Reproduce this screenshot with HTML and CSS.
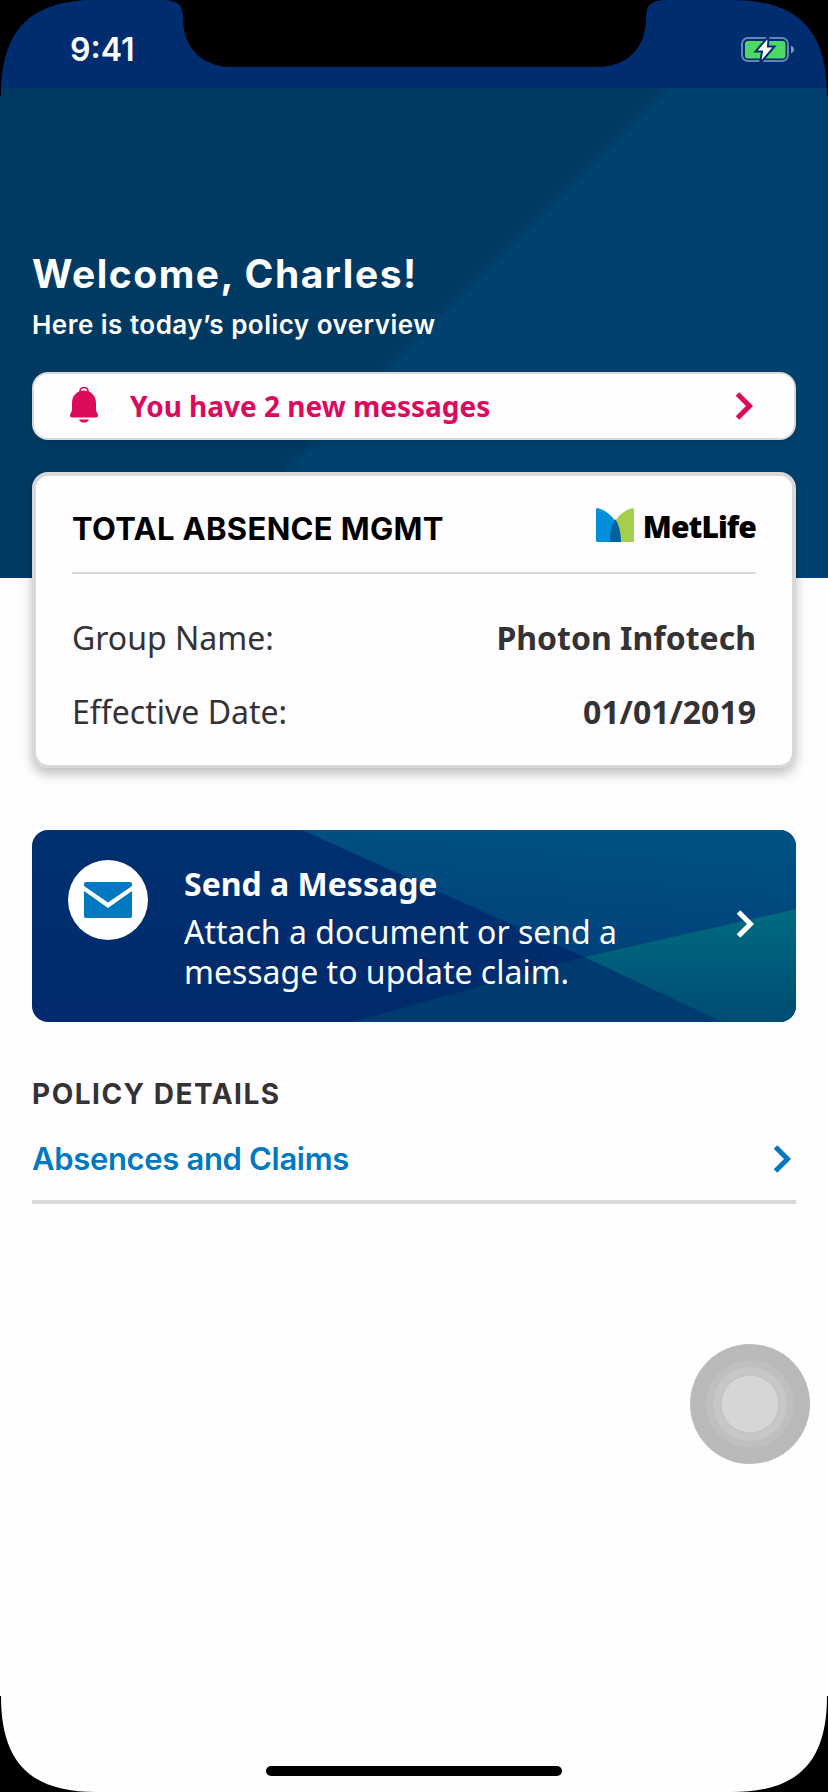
FILE: index.html
```html
<!DOCTYPE html>
<html lang="en">
<head>
<meta charset="utf-8">
<title>Policy overview</title>
<link rel="stylesheet" href="styles.css">
</head>
<body>
<div class="phone">
  <header class="status">
    <span class="time">9:41</span>
    <svg class="battery" width="54" height="28" viewBox="0 0 54 28">
      <rect x="1" y="2" width="46" height="23" rx="6" fill="none" stroke="#6684ad" stroke-width="2"/>
      <rect x="4" y="5" width="40.500" height="17.500" rx="3" fill="#4cd964"/>
      <path d="M50 9.500c4 1.500 4 6.500 0 8z" fill="#8096ba"/>
      <path d="M27.500 0.500L14.500 15.500h6.500L19 27.500 33.500 10.500h-6.500z" fill="#fff" stroke="#002d6f" stroke-width="2"/>
    </svg>
  </header>

  <section class="hero">
    <h1 class="welcome">Welcome, Charles!</h1>
    <p class="subtitle">Here is today’s policy overview</p>
    <a class="banner">
      <svg class="bell" width="28" height="38" viewBox="0 0 28 38">
        <circle cx="14" cy="5.500" r="4" fill="none" stroke="#db0a5b" stroke-width="1.700"/>
        <path d="M14 4.500C21 4.500 26 10 26 17V23.500C26 26 28 27.500 28 29.500Q28 31.500 26 31.500H2Q0 31.500 0 29.500C0 27.500 2 26 2 23.500V17C2 10 7 4.500 14 4.500ZM9 33.500H19Q18 36.600 14 36.600T9 33.500Z" fill="#db0a5b"/>
      </svg>
      <span class="banner-text">You have 2 new messages</span>
      <svg class="chev" width="20" height="28" viewBox="0 0 20 28"><path d="M2.500 2L14.500 14 2.500 26" fill="none" stroke="#db0a5b" stroke-width="5"/></svg>
    </a>
    <article class="card">
      <div class="card-head">
        <h2 class="card-title">TOTAL ABSENCE MGMT</h2>
        <div class="brand">
          <svg width="38" height="34" viewBox="0 0 38 34">
            <path d="M0 1.500Q0 0 1.500 0C15 4 25 16 25 34H1.500Q0 34 0 32.500Z" fill="#0090da"/>
            <path d="M38 1.500Q38 0 36.500 0C23 4 13.500 16 13.500 34H36.500Q38 34 38 32.500Z" fill="#a4ce4e"/>
            <path d="M19.300 11Q25 20 25 34H13.500Q13.500 20 19.300 11Z" fill="#0061a0"/>
          </svg>
          <span class="brand-name">MetLife</span>
        </div>
      </div>
      <dl class="facts">
        <div class="fact"><dt>Group Name:</dt><dd>Photon Infotech</dd></div>
        <div class="fact"><dt>Effective Date:</dt><dd>01/01/2019</dd></div>
      </dl>
    </article>
  </section>

  <main class="content">
    <a class="send">
      <svg class="send-bg" width="764" height="192" viewBox="0 0 764 192">
        <defs>
          <linearGradient id="top" x1="0.300" y1="1" x2="0.600" y2="0"><stop offset="0" stop-color="#00407a"/><stop offset="1" stop-color="#005283"/></linearGradient>
          <linearGradient id="left" x1="0" y1="0" x2="0" y2="1"><stop offset="0" stop-color="#003070"/><stop offset="1" stop-color="#002a6b"/></linearGradient>
          <linearGradient id="teal" x1="0" y1="0" x2="0" y2="1"><stop offset="0" stop-color="#006b80"/><stop offset="1" stop-color="#004c74"/></linearGradient>
        </defs>
        <rect width="764" height="192" fill="url(#left)"/>
        <path d="M270 0L552 127 764 79V0Z" fill="url(#top)"/>
        <path d="M552 127L320 192H690Z" fill="#003b70"/>
        <path d="M552 127L764 79V192H690Z" fill="url(#teal)"/>
      </svg>
      <span class="send-icon">
        <svg width="48" height="36" viewBox="0 0 48 36">
          <path d="M2 0H46Q48 0 48 2V4L24 20.500 0 4V2Q0 0 2 0ZM0 9L24 26 48 9V34Q48 36 46 36H2Q0 36 0 34Z" fill="#0079c1"/>
        </svg>
      </span>
      <span class="send-copy">
        <strong class="send-title">Send a Message</strong>
        <span class="send-text">Attach a document or send a<br>message to update claim.</span>
      </span>
      <svg class="chev" width="20" height="28" viewBox="0 0 20 28"><path d="M2.500 2L14.500 14 2.500 26" fill="none" stroke="#fff" stroke-width="5"/></svg>
    </a>
    <h3 class="section-title">POLICY DETAILS</h3>
    <a class="row">
      <span class="row-text">Absences and Claims</span>
      <svg class="chev" width="20" height="28" viewBox="0 0 20 28"><path d="M2.500 2L14.500 14 2.500 26" fill="none" stroke="#0079c1" stroke-width="5"/></svg>
    </a>
  </main>

  <svg class="touch" width="120" height="120" viewBox="0 0 120 120">
    <circle cx="60" cy="60" r="60" fill="#bab8bb"/>
    <circle cx="60" cy="60" r="44" fill="#c0bec1"/>
    <circle cx="60" cy="60" r="37" fill="#c8c6c9"/>
    <circle cx="60" cy="60" r="29" fill="#d7d5d8" stroke="#c1bfc2" stroke-width="1"/>
  </svg>

  <svg class="bezel" width="828" height="1792" viewBox="0 0 828 1792">
    <path d="M0 0H96C30 0 1 30 1 96H0ZM828 0H732C798 0 827 30 827 96H828ZM0 1792H96C30 1792 1 1762 1 1696H0ZM828 1792H732C798 1792 827 1762 827 1696H828Z"/>
    <path d="M166 0C178 1 183 5 183 18C183 50 204 67 232 67H597C625 67 646 50 646 18C646 5 651 1 663 0Z"/>
    <rect x="266" y="1766" width="296" height="10" rx="5"/>
  </svg>
</div>
</body>
</html>
```
FILE: styles.css
```css
* { box-sizing: border-box; margin: 0; padding: 0; }
body { background: #fffdff; }
.phone {
  position: relative;
  width: 828px;
  height: 1792px;
  overflow: hidden;
  background: #fffdff;
  font-family: "Noto Sans", sans-serif;
  color: #333235;
}
.status {
  display: flex;
  justify-content: space-between;
  height: 88px;
  padding: 0 33px 0 70px;
  background: #002d6f;
}
.time { padding-top: 30px; font: 600 32px/40px Inter, sans-serif; color: #fff; }
.battery { margin-top: 36px; }
.hero {
  height: 490px;
  padding: 162px 32px 0;
  background: linear-gradient(135deg, #003a63 50%, #00416f 51.200%);
}
.welcome { font: 700 39px/48px Inter, sans-serif; letter-spacing: 1.500px; color: #fff; white-space: nowrap; }
.subtitle { margin-top: 9px; font: 600 26px/36px Inter, sans-serif; letter-spacing: 0.480px; color: #fff; white-space: nowrap; }
.banner {
  display: flex;
  align-items: center;
  height: 68px;
  margin-top: 29px;
  padding: 0 39px 0 36px;
  border: 2px solid #d9d7d9;
  border-radius: 16px;
  background: #fffdff;
  box-shadow: 0 4px 8px rgba(0, 0, 0, 0.100);
}
.bell { margin-top: -3px; }
.banner-text { flex: 1; margin-left: 32px; font-size: 28px; font-weight: 700; line-height: 40px; color: #db0a5b; white-space: nowrap; }
.chev { display: block; flex: none; }
.card {
  height: 296px;
  margin-top: 32px;
  padding: 0 36px;
  border: 4px solid #d9d8d8;
  border-bottom-width: 3px;
  border-radius: 16px;
  background: #fffdff;
  box-shadow: 0 6px 12px rgba(0, 0, 0, 0.250);
}
.card-head {
  display: flex;
  justify-content: space-between;
  align-items: flex-start;
  height: 98px;
  padding-top: 32px;
  border-bottom: 2px solid #d9d9d9;
}
.card-title { font: 700 31px/42px Inter, sans-serif; letter-spacing: 0.330px; color: #000; white-space: nowrap; }
.brand { display: flex; align-items: flex-start; gap: 9px; color: #000; }
.brand-name { margin-top: -1px; font: 800 30px/40px "Open Sans", sans-serif; letter-spacing: -0.900px; white-space: nowrap; }
.facts { padding-top: 42px; font-size: 32px; line-height: 44px; }
.fact { display: flex; justify-content: space-between; margin-bottom: 30px; }
.fact dd { font-weight: 700; }
.content { padding: 252px 32px 0; }
.send {
  position: relative;
  display: flex;
  height: 192px;
  padding: 30px 40px 0 36px;
  border-radius: 16px;
  overflow: hidden;
  color: #fff;
}
.send-bg { position: absolute; inset: 0; }
.send-icon {
  position: relative;
  display: flex;
  align-items: center;
  justify-content: center;
  width: 80px;
  height: 80px;
  border-radius: 50%;
  background: #fff;
}
.send-copy { position: relative; flex: 1; margin-left: 36px; font-size: 32px; line-height: 40px; white-space: nowrap; }
.send-title { display: block; margin: 4px 0 8px; }
.send .chev { position: relative; margin-top: 50px; }
.section-title { margin-top: 52px; font: 700 28px/40px Inter, sans-serif; letter-spacing: 1.500px; }
.row {
  display: flex;
  justify-content: space-between;
  align-items: center;
  height: 90px;
  padding: 3px 3px 0 0;
  border-bottom: 4px solid #d9d9d8;
  color: #0079c1;
}
.row-text { font: 600 31px/40px Inter, sans-serif; letter-spacing: -0.330px; }
.touch { position: absolute; left: 690px; top: 1344px; }
.bezel { position: absolute; inset: 0; pointer-events: none; }
```
